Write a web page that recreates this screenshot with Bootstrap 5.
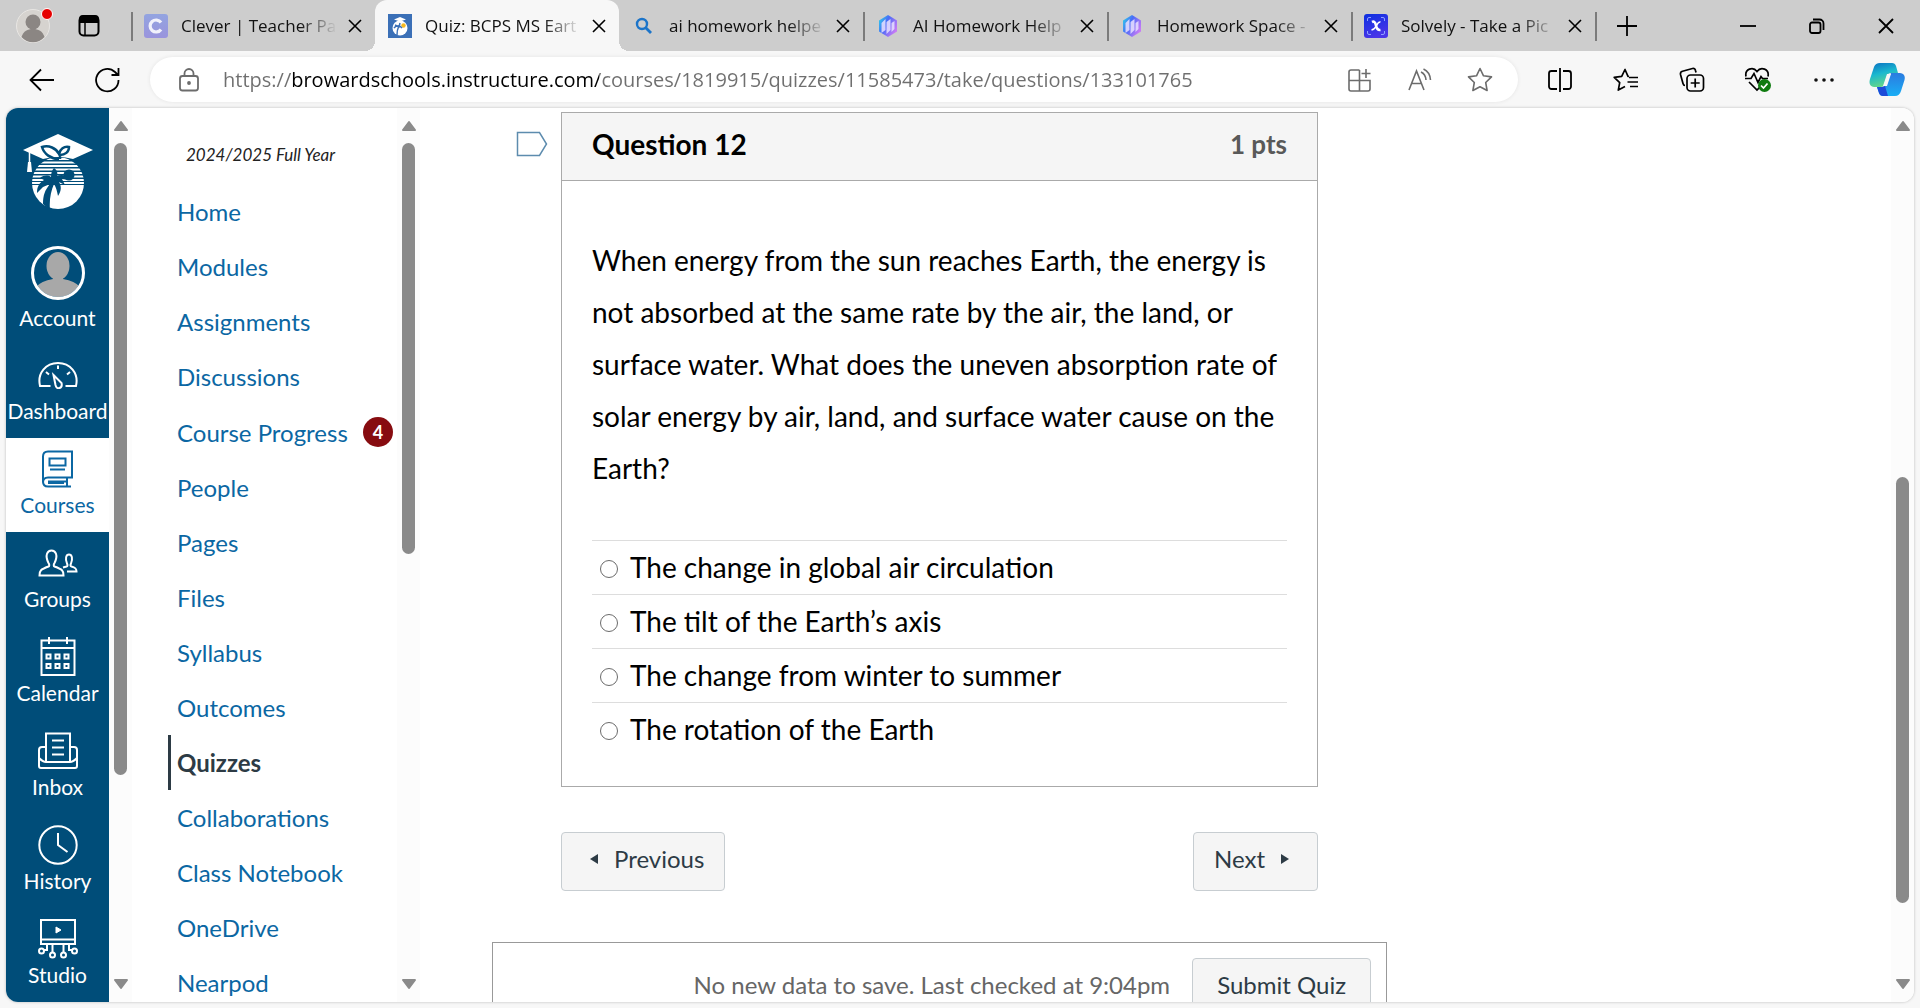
<!DOCTYPE html>
<html lang="en">
<head>
<meta charset="utf-8">
<meta name="viewport" content="width=device-width, initial-scale=1">
<title>Quiz: BCPS MS Earth</title>
<link href="https://cdn.jsdelivr.net/npm/bootstrap@5.3.0/dist/css/bootstrap.min.css" rel="stylesheet">
<style>
  :root { --ui: "Open Sans", "Noto Sans", sans-serif; --page: Lato, "Noto Sans", sans-serif; --navy: #004d79; --link: #0b67a3; }
  body { font-family: var(--page); background: #f7f7f7; color: #000; }
  svg { display: block; fill: none; flex: none; }
  svg:not([stroke]) { stroke: currentColor; }
  button { font-family: inherit; }
  .plain-btn { background: none; border: 0; padding: 0; color: inherit; display: flex; align-items: center; justify-content: center; }

  /* Browser frame */
  .tab-strip { height: 51px; background: #cdcdcd; font-family: var(--ui); padding-left: 131px; position: relative; }
  .profile-tools { position: absolute; left: 16px; top: 8px; gap: 24px; height: 35px; }
  .browser-tab { width: 244px; flex: none; padding: 0 13px 0 11px; border-left: 2px solid transparent; position: relative; }
  .browser-tab::before { content: ""; position: absolute; left: -2px; top: 12px; height: 29px; width: 2px; background: #7b7b7b; }
  .browser-tab.current::before, .browser-tab.after-current::before { display: none; }
  .browser-tab.current { background: #f7f7f7; border-radius: 12px 12px 0 0; }
  .browser-tab.current::after { content: ""; position: absolute; left: -12px; right: -10px; bottom: 0; height: 10px;
    background: radial-gradient(circle at 0 0, transparent 10px, #f7f7f7 10px) left / 10px 10px no-repeat,
                radial-gradient(circle at 100% 0, transparent 10px, #f7f7f7 10px) right / 10px 10px no-repeat; }
  .new-tab-cell { flex: 1 1 0; padding-right: 0; }
  .tab-title { color: #111; font-size: 17px; line-height: 24px; text-decoration: none; white-space: nowrap; overflow: hidden;
    width: 156px; margin-left: 13px; -webkit-mask-image: linear-gradient(90deg, #000 76%, transparent); mask-image: linear-gradient(90deg, #000 76%, transparent); }
  .window-tools .plain-btn { width: 69px; }
  .tool-row { height: 57px; padding: 0 3px 0 28px; }
  .refresh-btn { margin-left: 40px; }
  .icon-cells .plain-btn { width: 66px; }
  .icon-cells .plain-btn:last-child { width: 60px; }
  .address-bar { height: 45px; border-radius: 23px; background: #fff; margin: 0 9px 0 29px; padding: 0 25px 0 27px; box-shadow: 0 0 4px rgba(0,0,0,.08); color: #6c6c6c; gap: 34px; }
  .address-bar input { font-family: var(--ui); font-size: 20px; line-height: 28px; border: 0; outline: 0; padding: 0; margin-left: -12px; min-width: 0; color: transparent;
    background: linear-gradient(90deg, #6f6f6f 0 69px, #000 69px 376px, #6f6f6f 376px); -webkit-background-clip: text; background-clip: text; }

  /* Page area */
  .page-frame { margin: 0 6px 6px; border-radius: 12px; background: #fff; overflow: hidden; box-shadow: 0 0 3px rgba(0,0,0,.25); min-height: 0; }
  .scroll-rail { width: 23px; background: #fcfcfc; flex: none; padding: 12px 0; }
  .scroll-rail svg { fill: #8a8a8a; stroke: #8a8a8a; }
  .scroll-space { flex: 1; padding: 11px 0 14px; }
  .scroll-thumb { width: 13px; border-radius: 7px; background: #8a8a8a; }
  .page-scroll { padding-bottom: 75px; }

  .global-nav { width: 103px; background: var(--navy); flex: none; overflow: hidden; }
  .global-nav a { color: #fff; text-decoration: none; font-size: 21px; line-height: 26px; height: 94px; padding-top: 11px; gap: 4px; flex: none; white-space: nowrap; }
  .global-nav a.chosen { background: #fff; color: var(--link); }
  .global-nav a.school-mark { height: 127px; padding-top: 26px; }
  .global-nav a.account-item { height: 109px; gap: 5px; }
  .glyph-box { height: 39px; }

  .course-nav { width: 265px; flex: none; overflow: hidden; padding: 33px 0 0 36px; }
  .term-name { font-size: 17px; line-height: 28px; font-style: italic; margin: 0 0 15px 18px; color: #222; }
  .course-nav a { font-size: 24px; line-height: 31px; padding: 12px 0 12px 6px; color: var(--link); text-decoration: none; border-left: 3px solid transparent; flex: none; }
  .course-nav a.chosen { color: #2d3b45; font-weight: 700; border-color: #2d3b45; }
  .course-nav a.with-count { height: 56px; }
  .count-pill { width: 30px; height: 30px; border-radius: 50%; background: #870c10; color: #fff; font-size: 18px; line-height: 30px; font-weight: 700; text-align: center; }

  .quiz-area { padding: 4px 72px 0; overflow: hidden; min-width: 0; }
  .quiz-form { max-width: 895px; }
  .question-wrap { margin: 0 69px 45px; position: relative; }
  .flag-btn { position: absolute; left: -45px; top: 19px; color: #5d8cae; }
  .question-box { border: 1px solid #aaa; }
  .question-head { background: #f5f5f5; border-bottom: 1px solid #aaa; padding: 14px 30px 18px; font-size: 28px; line-height: 35px; font-weight: 700; }
  .question-head h2 { font: inherit; margin: 0; }
  .question-pts { color: #595959; font-size: 26px; }
  .question-body { padding: 53px 30px 30px; font-size: 28px; }
  .question-body p { line-height: 52px; margin: 0 0 46px; }
  .answer-row { border-top: 1px solid #ddd; height: 54px; line-height: 34px; padding: 0 0 2px 8px; gap: 12px; }
  .answer-row input { appearance: none; width: 18px; height: 18px; border: 1px solid #6b6b6b; border-radius: 50%; margin: 4px 0 0; background: #fff; flex: none; }
  .quiz-btn { background: #f5f5f5; border: 1px solid #c7cdd1; border-radius: 4px; color: #2d3b45; font-size: 24px; line-height: 32px; padding: 10px 20px 15px; --bs-btn-hover-bg: #eee; }
  .submit-box .quiz-btn { padding-left: 24px; padding-right: 24px; }
  .pager { margin: 0 69px 51px; }
  .submit-box { border: 1px solid #999; padding: 15px; height: 120px; gap: 22px; }
  .save-note { color: #666; font-size: 24px; line-height: 32px; padding-top: 11px; }
</style>
</head>
<body class="d-flex flex-column vh-100 overflow-hidden">

<header>
  <div class="tab-strip d-flex">
    <div class="profile-tools d-flex align-items-center">
      <button class="plain-btn" aria-label="Profile">
        <svg width="38" height="35" viewBox="0 0 38 35" stroke="none"><circle cx="17" cy="18" r="16.500" fill="#d6d3cf" stroke="#e8e6e3"/><circle cx="17" cy="14" r="7.500" fill="#8b8683"/><path d="M5.500 29c2-6 6-8 11.500-8s9.500 2 11.500 8c-6 7-17 7-23 0z" fill="#8b8683"/><circle cx="31" cy="6" r="5.500" fill="#e60000" stroke="#fff"/></svg>
      </button>
      <button class="plain-btn" aria-label="Tab actions">
        <svg width="22" height="22" viewBox="0 0 22 22" stroke-width="2"><rect x="1.500" y="1.500" width="19" height="19" rx="4"/><path d="M2 4a3 3 0 0 1 3-3h12a3 3 0 0 1 3 3v3H2z" fill="#000"/><path d="M7 8v12" stroke-width="1.500"/></svg>
      </button>
    </div>
    <div class="browser-tab d-flex align-items-center">
      <svg width="24" height="24" viewBox="0 0 24 24" stroke="none"><defs><linearGradient id="clv" x2="0" y2="1"><stop stop-color="#93a4e0"/><stop offset="1" stop-color="#9a94dd"/></linearGradient></defs><rect width="24" height="24" rx="3" fill="url(#clv)"/><path d="M17 8.500a6 6 0 1 0 0 7" stroke="#f1f1fb" stroke-width="3.200"/></svg>
      <a class="tab-title" href="#">Clever | Teacher Pa</a>
      <button class="plain-btn ms-auto" aria-label="Close tab"><svg width="14" height="14" viewBox="0 0 14 14" stroke-width="1.600"><path d="M1 1l12 12M13 1L1 13"/></svg></button>
    </div>
    <div class="browser-tab current d-flex align-items-center">
      <svg width="24" height="24" viewBox="0 0 24 24" stroke="none"><rect width="24" height="24" fill="#3b70b7"/><circle cx="12" cy="14" r="7.500" fill="#fff"/><path d="M6 5.500l6-2.500 6 2.500-6 2z" fill="#fff"/><circle cx="15.500" cy="11.500" r="2.200" fill="#f5b921"/><path d="M9 21c0-4 .5-6 1.500-8M6 14c2-3 6-3 8 0M7 11l4 2 1-4" stroke="#3b70b7" stroke-width="1.500"/></svg>
      <a class="tab-title" href="#">Quiz: BCPS MS Eart</a>
      <button class="plain-btn ms-auto" aria-label="Close tab"><svg width="14" height="14" viewBox="0 0 14 14" stroke-width="1.600"><path d="M1 1l12 12M13 1L1 13"/></svg></button>
    </div>
    <div class="browser-tab after-current d-flex align-items-center">
      <svg width="24" height="24" viewBox="0 0 24 24" stroke="#1b74c9" stroke-width="2.400"><circle cx="10" cy="10" r="5"/><path d="M13.500 13.500l5.500 5.500" stroke-width="2.800"/></svg>
      <a class="tab-title" href="#">ai homework helpe</a>
      <button class="plain-btn ms-auto" aria-label="Close tab"><svg width="14" height="14" viewBox="0 0 14 14" stroke-width="1.600"><path d="M1 1l12 12M13 1L1 13"/></svg></button>
    </div>
    <div class="browser-tab d-flex align-items-center">
      <svg width="24" height="24" viewBox="0 0 24 24" stroke="none"><defs><linearGradient id="hex" x2="1" y2=".6"><stop stop-color="#29e0e8"/><stop offset=".45" stop-color="#4a6cf7"/><stop offset="1" stop-color="#c77bf5"/></linearGradient></defs><path d="M12 1l9 5.500v11L12 23l-9-5.500v-11z" fill="url(#hex)"/><path d="M5.500 9l4-4v11l-4 3zM10.500 8l4-3v11l-4 4zM15.500 9l3-2v8l-3 3z" fill="#e9e2ff" fill-opacity=".85"/></svg>
      <a class="tab-title" href="#">AI Homework Help</a>
      <button class="plain-btn ms-auto" aria-label="Close tab"><svg width="14" height="14" viewBox="0 0 14 14" stroke-width="1.600"><path d="M1 1l12 12M13 1L1 13"/></svg></button>
    </div>
    <div class="browser-tab d-flex align-items-center">
      <svg width="24" height="24" viewBox="0 0 24 24" stroke="none"><path d="M12 1l9 5.500v11L12 23l-9-5.500v-11z" fill="url(#hex)"/><path d="M5.500 9l4-4v11l-4 3zM10.500 8l4-3v11l-4 4zM15.500 9l3-2v8l-3 3z" fill="#e9e2ff" fill-opacity=".85"/></svg>
      <a class="tab-title" href="#">Homework Space -</a>
      <button class="plain-btn ms-auto" aria-label="Close tab"><svg width="14" height="14" viewBox="0 0 14 14" stroke-width="1.600"><path d="M1 1l12 12M13 1L1 13"/></svg></button>
    </div>
    <div class="browser-tab d-flex align-items-center">
      <svg width="24" height="24" viewBox="0 0 24 24" stroke="none"><defs><linearGradient id="slv" x2=".4" y2="1"><stop stop-color="#0b2fe0"/><stop offset="1" stop-color="#4a35e8"/></linearGradient></defs><rect width="24" height="24" rx="3" fill="url(#slv)"/><path d="M3.500 7V5q0-1.500 1.500-1.500h2M17 3.500h2q1.500 0 1.500 1.500v2M20.500 17v2q0 1.500-1.500 1.500h-2M7 20.500H5q-1.500 0-1.500-1.500v-2" stroke="#8fa0ff"/><path d="M8 8q3-1.500 4 3.500t4.500 4.500" stroke="#fff" stroke-width="2.600"/><path d="M16.500 8q-2-.5-4 3.500t-5 4.500" stroke="#fff" stroke-width="1.600"/></svg>
      <a class="tab-title" href="#">Solvely - Take a Pic</a>
      <button class="plain-btn ms-auto" aria-label="Close tab"><svg width="14" height="14" viewBox="0 0 14 14" stroke-width="1.600"><path d="M1 1l12 12M13 1L1 13"/></svg></button>
    </div>
    <div class="browser-tab new-tab-cell d-flex align-items-center">
      <button class="plain-btn ms-2" aria-label="New tab"><svg width="22" height="22" viewBox="0 0 22 22" stroke-width="1.800"><path d="M11 1v20M1 11h20"/></svg></button>
    </div>
    <div class="window-tools d-flex">
      <button class="plain-btn" aria-label="Minimize"><svg width="16" height="16" viewBox="0 0 16 16" stroke-width="1.800"><path d="M0 8h16"/></svg></button>
      <button class="plain-btn" aria-label="Restore"><svg width="16" height="16" viewBox="0 0 16 16" stroke-width="1.800"><rect x="1" y="4.500" width="10.500" height="10.500" rx="2"/><path d="M4 1.500h6.500a4 4 0 0 1 4 4V12"/></svg></button>
      <button class="plain-btn" aria-label="Close window"><svg width="16" height="16" viewBox="0 0 16 16" stroke-width="1.800"><path d="M1 1l14 14M15 1L1 15"/></svg></button>
    </div>
  </div>

  <div class="tool-row d-flex align-items-center">
    <button class="plain-btn" aria-label="Back"><svg width="26" height="24" viewBox="0 0 26 24" stroke-width="1.800"><path d="M13 1.500L2.500 12 13 22.500M2.500 12H26"/></svg></button>
    <button class="plain-btn refresh-btn" aria-label="Refresh"><svg width="27" height="26" viewBox="0 0 27 26" stroke-width="1.800"><path d="M24.500 13A11.200 11.200 0 1 1 21 5l3 3M24.500 1v7h-7"/></svg></button>
    <div class="address-bar d-flex align-items-center flex-fill">
      <svg width="24" height="24" viewBox="0 0 24 24" stroke-width="1.800"><rect x="3" y="8" width="18" height="14.500" rx="2.500"/><path d="M7.500 8V5.500a4.500 4.500 0 0 1 9 0V8"/><circle cx="12" cy="15" r="1" fill="currentColor"/></svg>
      <input class="flex-fill" type="text" aria-label="Address" value="https://browardschools.instructure.com/courses/1819915/quizzes/11585473/take/questions/133101765">
      <button class="plain-btn" aria-label="Apps"><svg width="26" height="24" viewBox="0 0 26 24" stroke-width="1.600"><path d="M12.500 2H4a2 2 0 0 0-2 2v17a2 2 0 0 0 2 2h17a2 2 0 0 0 2-2v-8.500H2M12.500 2v21M19 1v9M14.500 5.500h9"/></svg></button>
      <button class="plain-btn" aria-label="Read aloud"><svg width="26" height="24" viewBox="0 0 26 24" stroke-width="1.600"><path d="M2 22L9.500 3 17 22M5 15.500h9M14 4q4.500 2 5 8M16.500 1q6.500 3 7 11"/></svg></button>
      <button class="plain-btn" aria-label="Favorite"><svg width="26" height="25" viewBox="0 0 26 25" stroke-width="1.600" stroke-linejoin="round"><path d="M13 1.500l3.500 7.300 8 1.100-5.800 5.600 1.400 8L13 19.700l-7.100 3.800 1.400-8L1.500 9.900l8-1.100z"/></svg></button>
    </div>
    <div class="icon-cells d-flex align-items-center">
      <button class="plain-btn" aria-label="Split screen"><svg width="26" height="24" viewBox="0 0 26 24" stroke-width="1.800"><path d="M10 3H4.500a2.500 2.500 0 0 0-2.500 2.500v13A2.500 2.500 0 0 0 4.500 21H10M16 3h5.500a2.500 2.500 0 0 1 2.500 2.500v13a2.500 2.500 0 0 1-2.500 2.500H16M13 0v24"/></svg></button>
      <button class="plain-btn" aria-label="Favorites list"><svg width="26" height="24" viewBox="0 0 26 24" stroke-width="1.700" stroke-linejoin="round"><path d="M16 8.500l-1-.2L12 1.500 8.700 8.300l-7.500 1 5.500 5.300-1.400 7.500 6.700-3.600M16 9.500h9M14.500 14H25M17 18.500h8"/></svg></button>
      <button class="plain-btn" aria-label="Collections"><svg width="26" height="25" viewBox="0 0 26 25" stroke-width="1.700"><path d="M6 18.500q-1.500 0-2-2L1.500 7.500Q1 5 3.500 4.300L13.500 1.500q2.500-.5 3 2l.5 2"/><rect x="8" y="8" width="16.500" height="16" rx="3.500"/><path d="M16.200 11.500v9M11.700 16h9"/></svg></button>
      <button class="plain-btn" aria-label="Browser essentials"><svg width="28" height="26" viewBox="0 0 28 26" stroke-width="1.700"><path d="M2 9.500C.5 2 9-1 13 4.500 17-1 25.500 2 24 9.500M5 15l8 8 3-3M1 11.500h6l3-5 4 9 3-6 1.500 2H24"/><circle cx="20.500" cy="18.500" r="6.500" fill="#0f7b10" stroke="none"/><path d="M17 18.500l2.500 2.500 4-4.500" stroke="#fff"/></svg></button>
      <button class="plain-btn" aria-label="Settings and more"><svg width="22" height="6" viewBox="0 0 22 6" stroke="none"><g fill="#111"><circle cx="3" cy="3" r="1.800"/><circle cx="11" cy="3" r="1.800"/><circle cx="19" cy="3" r="1.800"/></g></svg></button>
      <button class="plain-btn" aria-label="Copilot"><svg width="36" height="33" viewBox="0 0 36 33" stroke="none"><defs><linearGradient id="cpa" x2=".3" y2="1"><stop stop-color="#0a6fc2"/><stop offset=".5" stop-color="#1ab8cf"/><stop offset="1" stop-color="#63d68a"/></linearGradient><linearGradient id="cpb" x2="0" y2="1"><stop stop-color="#2b7be0"/><stop offset="1" stop-color="#19aef5"/></linearGradient></defs><path d="M11 0h12q3 0 4 3l2 7h-7q-3 0-4 3l-3 9q-1 2-3 2H5q-6-1-4-8L5 4q1.500-4 6-4z" fill="url(#cpa)"/><path d="M22 10h9q6 1 4.500 7L32 28q-1.500 5-6 5H14q-3 0-4-3L8 24h5q3 0 4-3z" fill="url(#cpb)"/><path d="M8 24h5l3-1 3 10h-5q-3 0-4-3z" fill="#1c4bd8"/><path d="M18 11h4l-4 12h-4z" fill="#f7f7f7"/></svg></button>
    </div>
  </div>
</header>

<div class="page-frame d-flex flex-fill">
  <nav class="global-nav d-flex flex-column" aria-label="Global">
    <a class="school-mark d-flex flex-column align-items-center" href="#" aria-label="Broward Schools">
      <svg width="70" height="75" viewBox="0 0 70 75" stroke="none"><defs><clipPath id="ball"><circle cx="35" cy="49" r="26"/></clipPath></defs>
        <g clip-path="url(#ball)"><path d="M5 51h60v26H5z" fill="#fff"/><path d="M5 25h60M5 28.500h60M5 32h60M5 35.500h60M5 39h60M5 42.500h60M5 46h60M5 49h60" stroke="#fff" stroke-width="2"/></g>
        <circle cx="46" cy="41" r="5.500" fill="#004d79"/>
        <path d="M20 70c0-9 2-14 7-20l-7 3-6 6c0-6 2-10 7-13l-4-2c4-3 8-3 11-1 0-4 1-7 3-9 3 2 4 5 3 8 5-2 9-1 12 4l-7-1 3 6-6-3c3 5 2 9-1 14-1-5-2-9-4-12-3 7-5 16-4 26z" fill="#004d79"/>
        <path d="M0 16L35 0l35 16-20 9q-15-4-30 0z" fill="#fff"/>
        <path d="M36 25c-8 0-15-5-17-12 7-2 14 1 17 7 1-5 5-8 10-7 0 5-4 8-9 8v4" stroke="#004d79" stroke-width="2.500"/>
        <path d="M6.500 17v12" stroke="#fff" stroke-width="1.500"/><path d="M5 28h3l1 10H4z" fill="#fff"/></svg>
    </a>
    <a class="account-item d-flex flex-column align-items-center" href="#">
      <svg width="54" height="54" viewBox="0 0 54 54"><defs><clipPath id="face"><circle cx="27" cy="27" r="24"/></clipPath></defs><g clip-path="url(#face)" fill="#a8a8a8" stroke="none"><ellipse cx="27" cy="20" rx="11.500" ry="14"/><path d="M22 28h10v5q12 2 17 8v13H5V41q5-6 17-8z"/></g><circle cx="27" cy="27" r="25.500" stroke="#fff" stroke-width="3"/></svg>
      <span>Account</span>
    </a>
    <a class="d-flex flex-column align-items-center" href="#">
      <span class="glyph-box d-flex align-items-center"><svg width="40" height="28" viewBox="0 0 40 28" stroke-width="2"><path d="M12.500 25H2C-1 12 8 2 20 2s21 10 18 23H27.500"/><path d="M20 4.500v3.500M8 11l3 2.500M32 11l-3 2.500"/><path d="M15.500 14l8 8q1 4-2 5t-4-3z"/></svg></span>
      <span>Dashboard</span>
    </a>
    <a class="chosen d-flex flex-column align-items-center" href="#">
      <span class="glyph-box d-flex align-items-center"><svg width="32" height="38" viewBox="0 0 32 38" stroke-width="2"><path d="M30 1.500H6q-5 0-5 5v26q0-5 5-5h24zM1 31.500q0 5 5 5h23M6 31.500h19M25 28v8M6 33h16" /><rect x="7.500" y="8.500" width="16" height="7"/><path d="M8 19.500h15"/></svg></span>
      <span>Courses</span>
    </a>
    <a class="d-flex flex-column align-items-center" href="#">
      <span class="glyph-box d-flex align-items-center"><svg width="40" height="28" viewBox="0 0 40 28" stroke-width="2"><path d="M1.500 26.500c0-5 1-6 9-9 1-.5 1-2 0-3.500-4-8-1-12.500 3-12.500s7 4.500 3 12.500c-1 1.500-1 3 0 3.500 8 3 9 4 9 9z"/><path d="M29 22.500h9.500c0-3-1-4-5-5-1.500-.5-1-2-.5-3 2-5 1-9-2-9s-4 4-2 9c.5 1 1 2.500-.5 3l-3.500 1"/></svg></span>
      <span>Groups</span>
    </a>
    <a class="d-flex flex-column align-items-center" href="#">
      <span class="glyph-box d-flex align-items-center"><svg width="36" height="39" viewBox="0 0 36 39" stroke-width="2"><path d="M1.500 3.500h33v34.500h-33zM1.500 11h33M9 0v7M27 0v7"/><path d="M6.500 17.500h4v4h-4zM15.500 17.500h4v4h-4zM24.500 17.500h4v4h-4zM6.500 27h4v4h-4zM15.500 27h4v4h-4zM24.500 27h4v4h-4z"/></svg></span>
      <span>Calendar</span>
    </a>
    <a class="d-flex flex-column align-items-center" href="#">
      <span class="glyph-box d-flex align-items-center"><svg width="40" height="38" viewBox="0 0 40 38" stroke-width="2"><path d="M8 30V1.500h24V30zM8 15H4q-3 0-3 3v16q0 2 2 2h34q2 0 2-2V18q0-3-3-3h-4M1 26q4 4 7 4h24q3 0 7-4"/><path d="M14 8.500h12M14 15.500h12M14 22.500h12"/></svg></span>
      <span>Inbox</span>
    </a>
    <a class="d-flex flex-column align-items-center" href="#">
      <span class="glyph-box d-flex align-items-center"><svg width="40" height="40" viewBox="0 0 40 40" stroke-width="2"><circle cx="20" cy="20" r="18.700"/><path d="M20 8v12l9.500 7"/></svg></span>
      <span>History</span>
    </a>
    <a class="d-flex flex-column align-items-center" href="#">
      <span class="glyph-box d-flex align-items-center"><svg width="40" height="40" viewBox="0 0 40 40" stroke-width="2"><path d="M3 1h34v24H3zM3 20.500h34M14.500 25v8M25.500 25v8M9 25v6H6M31 25v6h3"/><circle cx="3.500" cy="32" r="2.500"/><circle cx="36.500" cy="32" r="2.500"/><circle cx="14.500" cy="36" r="2.500"/><circle cx="25.500" cy="36" r="2.500"/><path d="M18 8l5 3-5 3z" fill="currentColor" stroke-width="1"/></svg></span>
      <span>Studio</span>
    </a>
  </nav>
  <div class="scroll-rail d-flex flex-column align-items-center">
    <svg width="16" height="12" viewBox="0 0 16 12" stroke-width="2" stroke-linejoin="round"><path d="M8 2l6 8H2z"/></svg>
    <div class="scroll-space"><div class="scroll-thumb" style="height:77%"></div></div>
    <svg width="16" height="12" viewBox="0 0 16 12" stroke-width="2" stroke-linejoin="round"><path d="M8 10l6-8H2z"/></svg>
  </div>

  <nav class="course-nav d-flex flex-column" aria-label="Course">
    <div class="term-name">2024/2025 Full Year</div>
    <a href="#">Home</a>
    <a href="#">Modules</a>
    <a href="#">Assignments</a>
    <a href="#">Discussions</a>
    <a class="with-count d-flex align-items-center" href="#">Course Progress <span class="count-pill ms-auto me-1">4</span></a>
    <a href="#">People</a>
    <a href="#">Pages</a>
    <a href="#">Files</a>
    <a href="#">Syllabus</a>
    <a href="#">Outcomes</a>
    <a class="chosen" href="#" aria-current="page">Quizzes</a>
    <a href="#">Collaborations</a>
    <a href="#">Class Notebook</a>
    <a href="#">OneDrive</a>
    <a href="#">Nearpod</a>
  </nav>
  <div class="scroll-rail d-flex flex-column align-items-center">
    <svg width="16" height="12" viewBox="0 0 16 12" stroke-width="2" stroke-linejoin="round"><path d="M8 2l6 8H2z"/></svg>
    <div class="scroll-space"><div class="scroll-thumb" style="height:50%"></div></div>
    <svg width="16" height="12" viewBox="0 0 16 12" stroke-width="2" stroke-linejoin="round"><path d="M8 10l6-8H2z"/></svg>
  </div>

  <main class="quiz-area flex-fill">
    <form class="quiz-form">
      <div class="question-wrap">
        <button type="button" class="plain-btn flag-btn" aria-label="Flag question"><svg width="32" height="26" viewBox="0 0 32 26" stroke-width="1.500"><path d="M1.500 1.500h22l7 11.500-7 11.500h-22z"/></svg></button>
        <div class="question-box">
          <div class="question-head d-flex justify-content-between"><h2>Question 12</h2><span class="question-pts">1 pts</span></div>
          <div class="question-body">
            <p>When energy from the sun reaches Earth, the energy is not absorbed at the same rate by the air, the land, or surface water. What does the uneven absorption rate of solar energy by air, land, and surface water cause on the Earth?</p>
            <div class="answer-row d-flex align-items-center"><input type="radio" name="answer" id="a1"><label for="a1">The change in global air circulation</label></div>
            <div class="answer-row d-flex align-items-center"><input type="radio" name="answer" id="a2"><label for="a2">The tilt of the Earth’s axis</label></div>
            <div class="answer-row d-flex align-items-center"><input type="radio" name="answer" id="a3"><label for="a3">The change from winter to summer</label></div>
            <div class="answer-row d-flex align-items-center"><input type="radio" name="answer" id="a4"><label for="a4">The rotation of the Earth</label></div>
          </div>
        </div>
      </div>
      <div class="pager d-flex justify-content-between">
        <button type="button" class="btn quiz-btn d-flex align-items-center"><svg class="ms-2 me-3" width="8" height="10" viewBox="0 0 8 10" stroke="none"><path d="M8 0v10L0 5z" fill="#2d3b45"/></svg>Previous</button>
        <button type="button" class="btn quiz-btn d-flex align-items-center">Next<svg class="ms-3 me-2" width="8" height="10" viewBox="0 0 8 10" stroke="none"><path d="M0 0v10l8-5z" fill="#2d3b45"/></svg></button>
      </div>
      <div class="submit-box d-flex justify-content-end align-items-start">
        <span class="save-note">No new data to save. Last checked at 9:04pm</span>
        <button type="button" class="btn quiz-btn">Submit Quiz</button>
      </div>
    </form>
  </main>
  <div class="scroll-rail d-flex flex-column align-items-center">
    <svg width="16" height="12" viewBox="0 0 16 12" stroke-width="2" stroke-linejoin="round"><path d="M8 2l6 8H2z"/></svg>
    <div class="scroll-space page-scroll d-flex flex-column justify-content-end"><div class="scroll-thumb" style="height:56%"></div></div>
    <svg width="16" height="12" viewBox="0 0 16 12" stroke-width="2" stroke-linejoin="round"><path d="M8 10l6-8H2z"/></svg>
  </div>
</div>
<script src="https://cdn.jsdelivr.net/npm/bootstrap@5.3.0/dist/js/bootstrap.bundle.min.js"></script>
</body>
</html>
